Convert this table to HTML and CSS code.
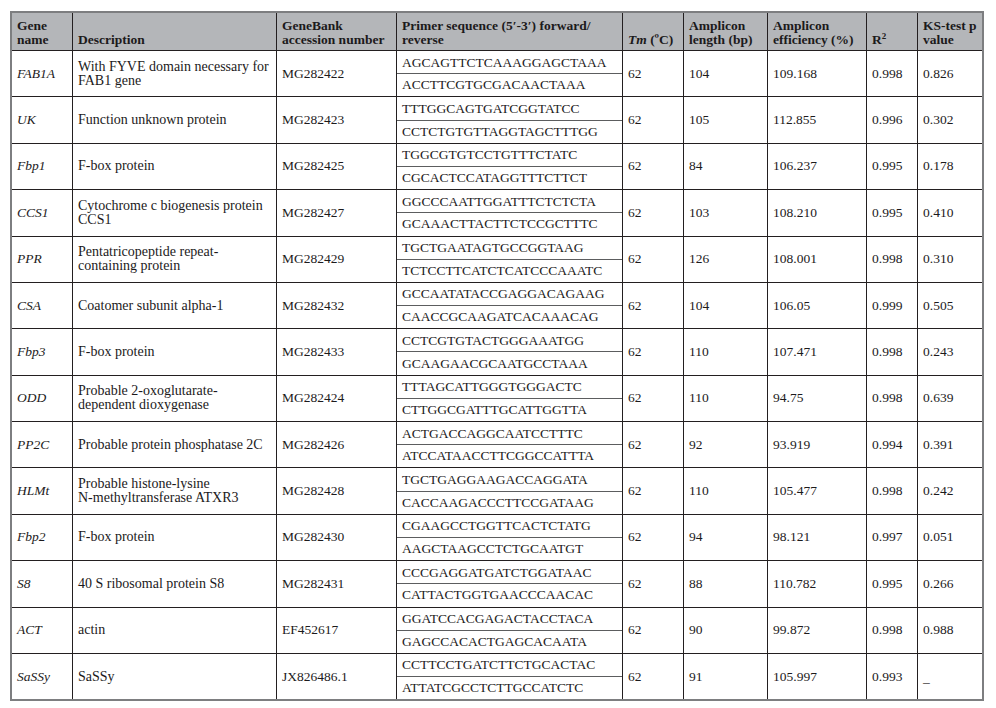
FILE: index.html
```html
<!DOCTYPE html>
<html lang="en">
<head>
<meta charset="utf-8">
<title>Candidate reference genes</title>
<link rel="stylesheet" href="styles.css">
</head>
<body>
<div class="tbl">
  <div class="h">Gene<br>name</div>
  <div class="h">Description</div>
  <div class="h">GeneBank<br>accession number</div>
  <div class="h">Primer sequence (5′-3′) forward/<br>reverse</div>
  <div class="h"><span><i>Tm</i> (ºC)</span></div>
  <div class="h">Amplicon<br>length (bp)</div>
  <div class="h">Amplicon<br>efficiency (%)</div>
  <div class="h"><span>R<sup>2</sup></span></div>
  <div class="h">KS-test p<br>value</div>

  <div class="c g s">FAB1A</div><div class="c d s">With FYVE domain necessary for<br>FAB1 gene</div><div class="c s">MG282422</div>
  <div class="c p1">AGCAGTTCTCAAAGGAGCTAAA</div><div class="c s">62</div><div class="c s">104</div><div class="c s">109.168</div><div class="c s">0.998</div><div class="c s">0.826</div>
  <div class="c p2">ACCTTCGTGCGACAACTAAA</div>

  <div class="c g s">UK</div><div class="c d s">Function unknown protein</div><div class="c s">MG282423</div>
  <div class="c p1">TTTGGCAGTGATCGGTATCC</div><div class="c s">62</div><div class="c s">105</div><div class="c s">112.855</div><div class="c s">0.996</div><div class="c s">0.302</div>
  <div class="c p2">CCTCTGTGTTAGGTAGCTTTGG</div>

  <div class="c g s">Fbp1</div><div class="c d s">F-box protein</div><div class="c s">MG282425</div>
  <div class="c p1">TGGCGTGTCCTGTTTCTATC</div><div class="c s">62</div><div class="c s">84</div><div class="c s">106.237</div><div class="c s">0.995</div><div class="c s">0.178</div>
  <div class="c p2">CGCACTCCATAGGTTTCTTCT</div>

  <div class="c g s">CCS1</div><div class="c d s">Cytochrome c biogenesis protein<br>CCS1</div><div class="c s">MG282427</div>
  <div class="c p1">GGCCCAATTGGATTTCTCTCTA</div><div class="c s">62</div><div class="c s">103</div><div class="c s">108.210</div><div class="c s">0.995</div><div class="c s">0.410</div>
  <div class="c p2">GCAAACTTACTTCTCCGCTTTC</div>

  <div class="c g s">PPR</div><div class="c d s">Pentatricopeptide repeat-<br>containing protein</div><div class="c s">MG282429</div>
  <div class="c p1">TGCTGAATAGTGCCGGTAAG</div><div class="c s">62</div><div class="c s">126</div><div class="c s">108.001</div><div class="c s">0.998</div><div class="c s">0.310</div>
  <div class="c p2">TCTCCTTCATCTCATCCCAAATC</div>

  <div class="c g s">CSA</div><div class="c d s">Coatomer subunit alpha-1</div><div class="c s">MG282432</div>
  <div class="c p1">GCCAATATACCGAGGACAGAAG</div><div class="c s">62</div><div class="c s">104</div><div class="c s">106.05</div><div class="c s">0.999</div><div class="c s">0.505</div>
  <div class="c p2">CAACCGCAAGATCACAAACAG</div>

  <div class="c g s">Fbp3</div><div class="c d s">F-box protein</div><div class="c s">MG282433</div>
  <div class="c p1">CCTCGTGTACTGGGAAATGG</div><div class="c s">62</div><div class="c s">110</div><div class="c s">107.471</div><div class="c s">0.998</div><div class="c s">0.243</div>
  <div class="c p2">GCAAGAACGCAATGCCTAAA</div>

  <div class="c g s">ODD</div><div class="c d s">Probable 2-oxoglutarate-<br>dependent dioxygenase</div><div class="c s">MG282424</div>
  <div class="c p1">TTTAGCATTGGGTGGGACTC</div><div class="c s">62</div><div class="c s">110</div><div class="c s">94.75</div><div class="c s">0.998</div><div class="c s">0.639</div>
  <div class="c p2">CTTGGCGATTTGCATTGGTTA</div>

  <div class="c g s">PP2C</div><div class="c d s">Probable protein phosphatase 2C</div><div class="c s">MG282426</div>
  <div class="c p1">ACTGACCAGGCAATCCTTTC</div><div class="c s">62</div><div class="c s">92</div><div class="c s">93.919</div><div class="c s">0.994</div><div class="c s">0.391</div>
  <div class="c p2">ATCCATAACCTTCGGCCATTTA</div>

  <div class="c g s">HLMt</div><div class="c d s">Probable histone-lysine<br>N-methyltransferase ATXR3</div><div class="c s">MG282428</div>
  <div class="c p1">TGCTGAGGAAGACCAGGATA</div><div class="c s">62</div><div class="c s">110</div><div class="c s">105.477</div><div class="c s">0.998</div><div class="c s">0.242</div>
  <div class="c p2">CACCAAGACCCTTCCGATAAG</div>

  <div class="c g s">Fbp2</div><div class="c d s">F-box protein</div><div class="c s">MG282430</div>
  <div class="c p1">CGAAGCCTGGTTCACTCTATG</div><div class="c s">62</div><div class="c s">94</div><div class="c s">98.121</div><div class="c s">0.997</div><div class="c s">0.051</div>
  <div class="c p2">AAGCTAAGCCTCTGCAATGT</div>

  <div class="c g s">S8</div><div class="c d s">40 S ribosomal protein S8</div><div class="c s">MG282431</div>
  <div class="c p1">CCCGAGGATGATCTGGATAAC</div><div class="c s">62</div><div class="c s">88</div><div class="c s">110.782</div><div class="c s">0.995</div><div class="c s">0.266</div>
  <div class="c p2">CATTACTGGTGAACCCAACAC</div>

  <div class="c g s">ACT</div><div class="c d s">actin</div><div class="c s">EF452617</div>
  <div class="c p1">GGATCCACGAGACTACCTACA</div><div class="c s">62</div><div class="c s">90</div><div class="c s">99.872</div><div class="c s">0.998</div><div class="c s">0.988</div>
  <div class="c p2">GAGCCACACTGAGCACAATA</div>

  <div class="c g s">SaSSy</div><div class="c d s">SaSSy</div><div class="c s">JX826486.1</div>
  <div class="c p1">CCTTCCTGATCTTCTGCACTAC</div><div class="c s">62</div><div class="c s">91</div><div class="c s">105.997</div><div class="c s">0.993</div><div class="c s"><span class="nil">–</span></div>
  <div class="c p2">ATTATCGCCTCTTGCCATCTC</div>
</div>
</body>
</html>
```
FILE: styles.css
```css
html, body {
  margin: 0;
  background: #ffffff;
}
body {
  padding: 11px 0 0 10px;
  font-family: "Liberation Serif", "Times New Roman", serif;
  font-size: 13.5px;
  line-height: 14px;
  color: #1c1a1b;
}
.tbl {
  display: grid;
  width: 970px;
  grid-template-columns: 60px 203px 119px 225px 60px 83px 98px 50px 64px;
  grid-template-rows: 37px;
  grid-auto-rows: 22.2px;
  gap: 1px;
  background: #231f20;
  border: 2px solid #7d7e80;
}
.h {
  background: #b4b6b9;
  font-weight: bold;
  display: flex;
  flex-direction: column;
  justify-content: flex-end;
  padding: 0 3px 3px 5px;
}
.h sup {
  font-size: 9px;
  line-height: 0;
  vertical-align: 5px;
}
.c {
  background: #ffffff;
  display: flex;
  flex-direction: column;
  justify-content: center;
  padding: 0 3px 0 5px;
  white-space: nowrap;
}
.s {
  grid-row: span 2;
}
.g {
  font-style: italic;
  padding-left: 5px;
}
.d {
  font-size: 14px;
}
.p1 {
  grid-column: 4;
  border-bottom: 1px solid #5c5d5f;
  margin-bottom: -1px;
  padding-top: 1px;
}
.p2 {
  grid-column: 4;
}
.nil {
  margin-top: 11px;
}
```
